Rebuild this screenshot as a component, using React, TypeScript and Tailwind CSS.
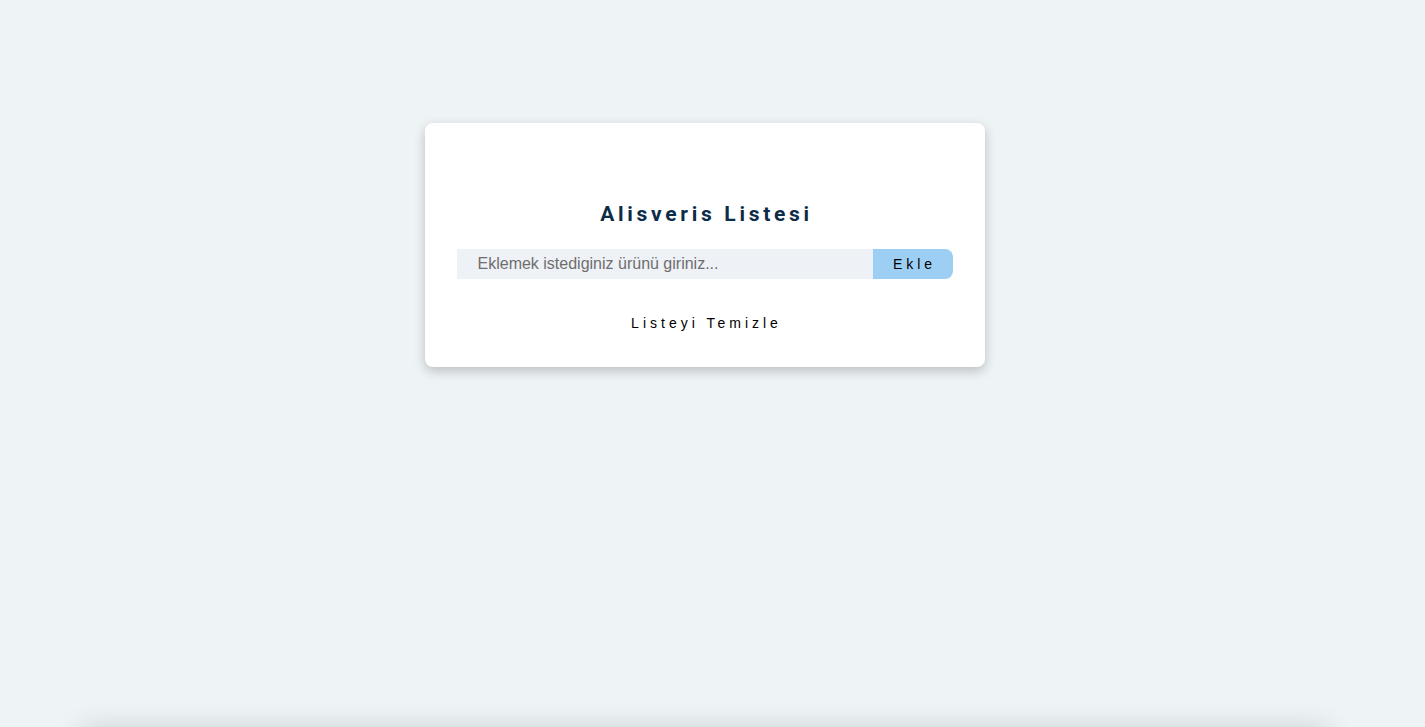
import React from "react";

const App = () => {
  return (
    <div className="min-h-screen w-full bg-[#eef3f5] flex flex-col items-center overflow-hidden" style={{ fontFamily: '"Liberation Sans", Arial, sans-serif' }}>
      <div className="mt-[123px] mr-4 w-[560px] h-[244px] bg-white rounded-lg shadow-[0_4px_12px_rgba(0,0,0,0.22)] flex flex-col items-center pt-[77px] px-8">
        <h1 className="text-[21px] leading-[28px] font-bold tracking-[3.7px] text-[#0d2c47] font-['Roboto',sans-serif] pl-1">
          Alisveris Listesi
        </h1>
        <div className="mt-[21px] w-full flex h-[30px]">
          <input
            type="text"
            placeholder="Eklemek istediginiz ürünü giriniz..."
            className="flex-1 h-full bg-[#eef2f6] pl-[21px] text-[16px] text-[#333] placeholder:text-[#6e6e6e] outline-none"
          />
          <button className="w-20 h-full bg-[#9dcff5] rounded-r-lg text-[14px] tracking-[4px] text-black pl-1">
            Ekle
          </button>
        </div>
        <button className="mt-[34px] text-[14px] tracking-[4px] text-black pl-1">
          Listeyi Temizle
        </button>
      </div>
      <div className="mt-[368px] mr-4 w-[1250px] h-[200px] shrink-0 bg-[#eef2f5] rounded-lg shadow-[0_-6px_28px_rgba(0,0,0,0.16)]" />
    </div>
  );
};

export default App;
